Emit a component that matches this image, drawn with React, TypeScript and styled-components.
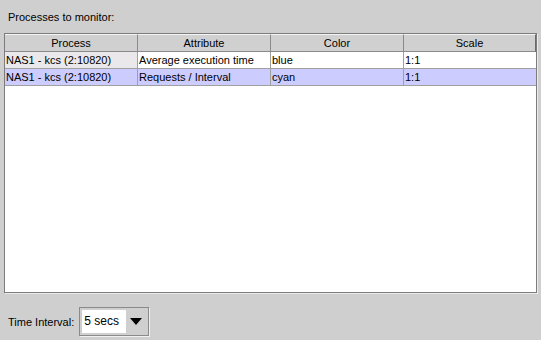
import React from "react";
import styled, { createGlobalStyle } from "styled-components";

const Global = createGlobalStyle`
  html, body { margin: 0; padding: 0; background: #cfcfcf; }
  body { font-family: "Liberation Sans", Arial, sans-serif; font-size: 11px; color: #000; }
`;

const Page = styled.div`
  width: 541px;
  height: 340px;
  box-sizing: border-box;
  padding: 11px 4px 0 4px;
  display: flex;
  flex-direction: column;
  background: #cfcfcf;
`;

const Title = styled.div`
  padding-left: 4px;
  height: 13px;
  line-height: 13px;
  margin-bottom: 9px;
`;

const TableFrame = styled.div`
  width: 533px;
  height: 260px;
  box-sizing: border-box;
  border: 1px solid #7c7c7c;
  box-shadow: 1px 1px 0 #ececec;
  background: #fff;
  display: flex;
  flex-direction: column;
`;

const Row = styled.div<{ $bg?: string }>`
  display: grid;
  grid-template-columns: 133px 133px 133px 132px;
  background: ${(p) => p.$bg || "#fff"};
`;

const HeaderCell = styled.div`
  height: 18px;
  box-sizing: border-box;
  background: #d0d0d0;
  border-right: 1px solid #8a8a8a;
  border-bottom: 1px solid #8a8a8a;
  border-top: 1px solid #f4f4f4;
  text-align: center;
  line-height: 16px;
  &:last-child { border-right: 1px solid #6a6a6a; }
`;

const Cell = styled.div<{ $bg?: string }>`
  height: 17px;
  box-sizing: border-box;
  border-right: 1px solid #a0a0a0;
  border-bottom: 1px solid #a0a0a0;
  padding-left: 1px;
  line-height: 16px;
  white-space: nowrap;
  overflow: hidden;
  background: ${(p) => p.$bg || "transparent"};
  &:last-child { border-right: none; }
`;

const Footer = styled.div`
  display: flex;
  align-items: center;
  gap: 5px;
  padding-left: 4px;
  margin-top: 14px;
`;

const Combo = styled.div`
  width: 70px;
  height: 29px;
  box-sizing: border-box;
  border: 1px solid #8a8a8a;
  box-shadow: 1px 1px 0 #f0f0f0;
  display: flex;
  padding: 2px;
`;

const ComboText = styled.div`
  flex: 1;
  background: #fff;
  line-height: 23px;
  padding-left: 2px;
  font-size: 12px;
`;

const ComboButton = styled.div`
  width: 20px;
  display: flex;
  align-items: center;
  justify-content: center;
  background: #cfcfcf;
`;

const rows = [
  { process: "NAS1 - kcs (2:10820)", attr: "Average execution time", color: "blue", scale: "1:1", bg: "#fff", first: "#ebe8eb" },
  { process: "NAS1 - kcs (2:10820)", attr: "Requests / Interval", color: "cyan", scale: "1:1", bg: "#ccccff", first: undefined },
];

export default function App() {
  return (
    <>
      <Global />
      <Page>
        <Title>Processes to monitor:</Title>
        <TableFrame>
          <Row $bg="#d0d0d0">
            <HeaderCell>Process</HeaderCell>
            <HeaderCell>Attribute</HeaderCell>
            <HeaderCell>Color</HeaderCell>
            <HeaderCell>Scale</HeaderCell>
          </Row>
          {rows.map((r, i) => (
            <Row key={i} $bg={r.bg}>
              <Cell $bg={r.first}>{r.process}</Cell>
              <Cell>{r.attr}</Cell>
              <Cell>{r.color}</Cell>
              <Cell>{r.scale}</Cell>
            </Row>
          ))}
        </TableFrame>
        <Footer>
          <span>Time Interval:</span>
          <Combo>
            <ComboText>5 secs</ComboText>
            <ComboButton>
              <svg width="12" height="7" viewBox="0 0 12 7">
                <polygon points="0,0 12,0 6,7" fill="#000" />
              </svg>
            </ComboButton>
          </Combo>
        </Footer>
      </Page>
    </>
  );
}
